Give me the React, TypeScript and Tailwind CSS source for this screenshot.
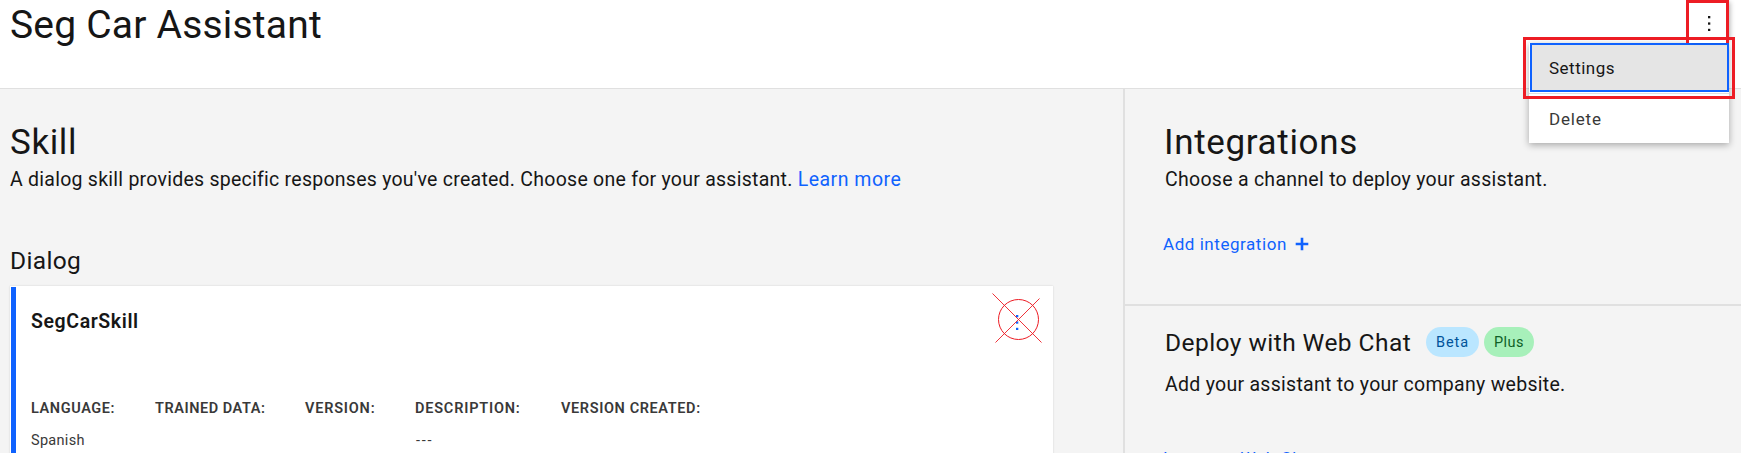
function Dots({ className }: { className: string }) {
  return (
    <svg className={className} width="4" height="16" viewBox="0 0 4 16" fill="currentColor">
      <rect x="1" y="1" width="2.3" height="2.3" />
      <rect x="1" y="7.4" width="2.3" height="2.3" />
      <rect x="1" y="13.8" width="2.3" height="2.3" />
    </svg>
  );
}

function Header() {
  return (
    <header className="h-[89px] shrink-0 border-b border-[#e0e0e0] bg-white pl-[10px]">
      <h1 className="text-[39px] leading-[50px] tracking-[0.2px]">Seg Car Assistant</h1>
    </header>
  );
}

const fields = [
  { label: "LANGUAGE:", value: "Spanish", width: "w-[124px]", tracking: "tracking-[0.6px]" },
  { label: "TRAINED DATA:", value: "", width: "w-[150px]", tracking: "tracking-[0.54px]" },
  { label: "VERSION:", value: "", width: "w-[110px]", tracking: "tracking-[0.8px]" },
  { label: "DESCRIPTION:", value: "---", width: "w-[146px]", tracking: "tracking-[0.8px]" },
  { label: "VERSION CREATED:", value: "", width: "w-[160px]", tracking: "tracking-[0.62px]" },
];

function SkillCard() {
  return (
    <article className="relative mt-[7px] flex h-[220px] w-[1043px] bg-white pt-px pl-px shadow-[0_0_2px_rgba(0,0,0,0.14)]">
      <div className="w-[5px] bg-[#0f62fe]" />
      <div className="pt-[21px] pl-[15px]">
        <h4 className="text-[19.5px] leading-[28px] font-semibold tracking-[0.6px]">SegCarSkill</h4>
        <dl className="mt-[63px] flex text-[14.5px] leading-5 text-[#393939]">
          {fields.map((f) => (
            <div key={f.label} className={f.width}>
              <dt className={`font-semibold whitespace-nowrap ${f.tracking}`}>{f.label}</dt>
              <dd className={`mt-3 ${f.value === "---" ? "pl-px tracking-[1.8px]" : "tracking-[0.3px]"}`}>{f.value}</dd>
            </div>
          ))}
        </dl>
      </div>
      <Dots className="absolute top-[28px] left-[1005px] text-[#0f62fe]" />
      <svg
        className="absolute top-[6px] left-[981px]"
        width="52"
        height="52"
        viewBox="0 0 52 52"
        fill="none"
        stroke="#ed1c24"
        strokeWidth="0.9"
      >
        <circle cx="27.5" cy="27.5" r="20" strokeWidth="1" />
        <path d="M1.500 1.500 50.500 50.500M48.500 6.500 4.500 50.500" />
      </svg>
    </article>
  );
}

function SkillPanel() {
  return (
    <section className="w-[1123px] shrink-0 pt-[34px] pl-[10px]">
      <h2 className="text-[35px] leading-[40px] tracking-[0.6px]">Skill</h2>
      <p className="mt-[3px] text-[19.5px] leading-[28px] whitespace-nowrap">
        <span className="tracking-[0.255px]">
          A dialog skill provides specific responses you've created. Choose one for your assistant.{" "}
        </span>
        <a className="tracking-[0.5px] text-[#0f62fe]">Learn more</a>
      </p>
      <h3 className="mt-[49px] text-[24.5px] leading-[36px] tracking-[0.35px]">Dialog</h3>
      <SkillCard />
    </section>
  );
}

function IntegrationsPanel() {
  return (
    <section className="grow border-l-2 border-[#e0e0e0]">
      <div className="h-[217px] border-b-2 border-[#e0e0e0] pt-[34px] pl-[40px]">
        <h2 className="-ml-px text-[35px] leading-[40px] tracking-[0.65px]">Integrations</h2>
        <p className="mt-[3px] text-[19.5px] leading-[28px] tracking-[0.28px]">Choose a channel to deploy your assistant.</p>
        <a className="mt-[38px] -ml-[2px] flex items-center text-[17px] leading-6 tracking-[0.55px] text-[#0f62fe]">
          Add integration
          <svg className="ml-[8px]" width="14" height="14" viewBox="0 0 14 14" fill="currentColor">
            <path d="M5.700 .7h2.600v5h5v2.600h-5v5H5.700v-5h-5V5.700h5z" />
          </svg>
        </a>
      </div>
      <div className="pt-[18px] pl-[40px]">
        <div className="flex h-[37px] items-start">
          <h3 className="w-[261px] text-[24.5px] leading-[37px] tracking-[0.45px]">Deploy with Web Chat</h3>
          <span className="mt-[3px] flex h-[30px] w-[53px] justify-center rounded-full bg-[#bae6ff] text-[14.5px] leading-[31px] tracking-[0.9px] text-[#00539a]">
            Beta
          </span>
          <span className="mt-[3px] ml-[5px] flex h-[30px] w-[50px] justify-center rounded-full bg-[#a7f0ba] text-[14.5px] leading-[31px] tracking-[0.5px] text-[#0e6027]">
            Plus
          </span>
        </div>
        <p className="mt-[10px] text-[19.5px] leading-[28px] tracking-[0.28px]">Add your assistant to your company website.</p>
        <a className="mt-[47px] -ml-[2px] block text-[17px] leading-6 tracking-[0.6px] text-[#0f62fe]">Integrate Web Chat</a>
      </div>
    </section>
  );
}

function OverflowMenu() {
  return (
    <>
      <div className="absolute top-[43px] left-[1529px] h-[100px] w-[200px] bg-white text-[17px] shadow-[0_2px_7px_rgba(0,0,0,0.32)]">
        <div className="ml-px h-[49px] border-2 border-[#0f62fe] bg-[#e5e5e5] pl-[17px] leading-[46px] tracking-[0.5px]">
          Settings
        </div>
        <div className="mt-px h-[50px] border-t border-[#e0e0e0] pl-5 leading-[50px] tracking-[0.8px] text-[#393939]">
          Delete
        </div>
      </div>
      <div className="absolute top-0 left-[1686px] flex h-[43px] w-[43px] border-[3px] border-b-0 border-[#ed1c24] bg-white shadow-[3px_0_5px_-2px_rgba(0,0,0,0.3)]">
        <Dots className="mt-3 ml-[18px]" />
      </div>
      <div className="absolute top-[37px] left-[1523px] h-[62px] w-[212px] border-[3px] border-[#ed1c24]" />
    </>
  );
}

export default function App() {
  return (
    <div className="relative flex h-[453px] w-[1741px] flex-col overflow-hidden bg-[#f4f4f4] font-['Roboto','Liberation_Sans',sans-serif] text-[#161616]">
      <Header />
      <main className="flex min-h-0 grow">
        <SkillPanel />
        <IntegrationsPanel />
      </main>
      <OverflowMenu />
    </div>
  );
}
